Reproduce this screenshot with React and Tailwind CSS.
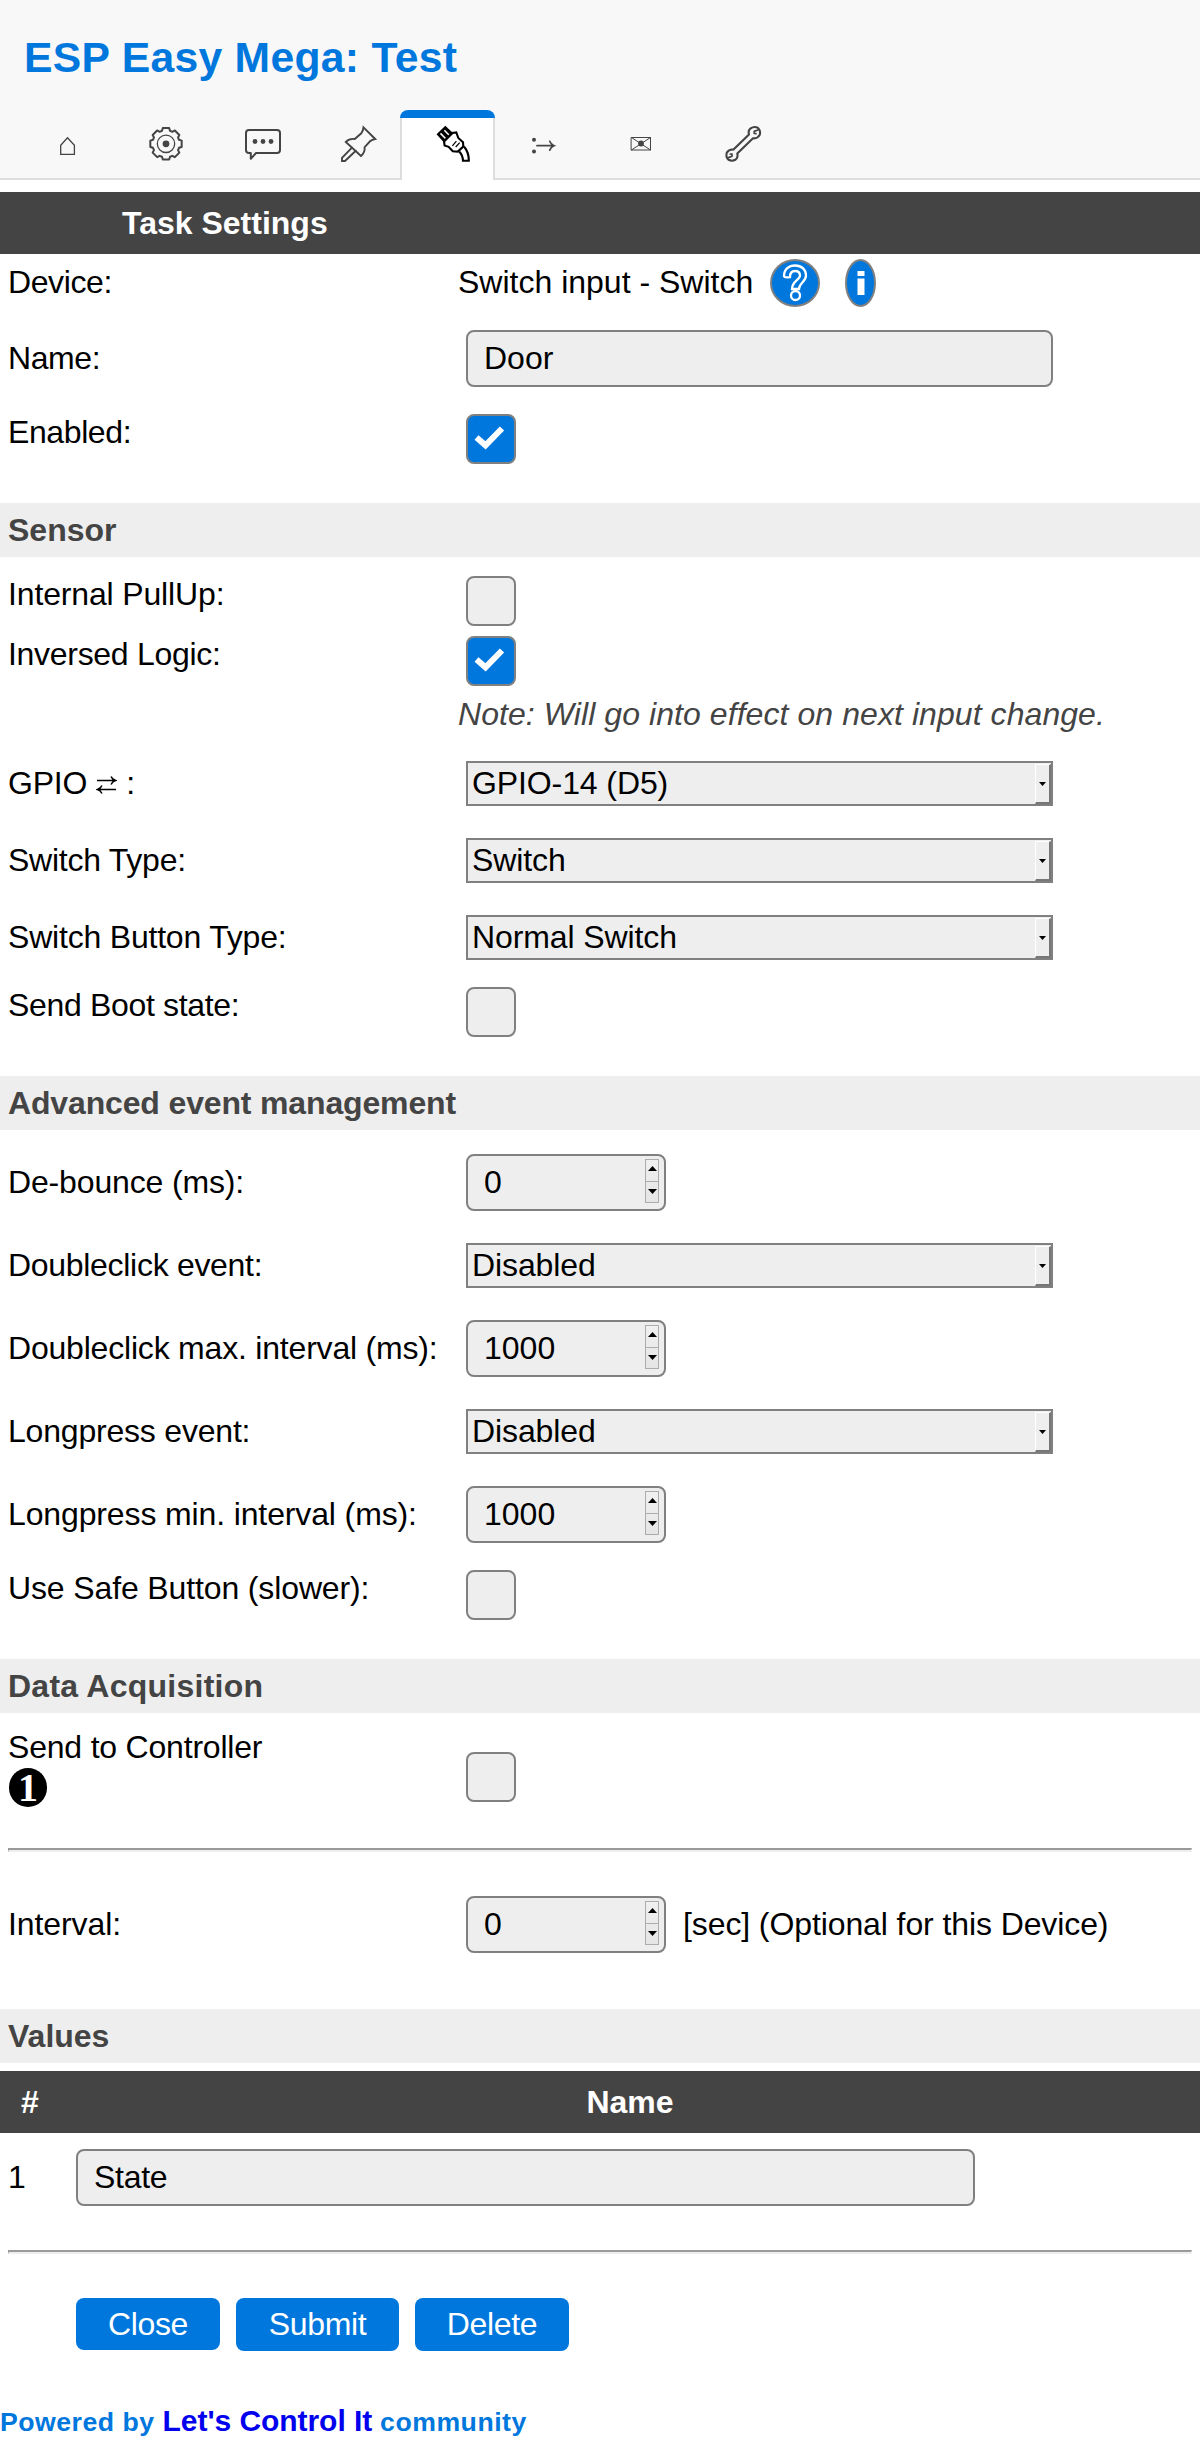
import React from "react";

const stroke = { fill: "none", stroke: "#444", strokeWidth: 2, strokeLinejoin: "round", strokeLinecap: "round" };

function gearPath(cx, cy) {
  const pts = [];
  for (let i = 0; i < 8; i++) {
    const a = (i * Math.PI) / 4;
    [[-0.3, 13.6], [-0.2, 16], [0.2, 16], [0.3, 13.6]].forEach(([d, r]) => {
      pts.push(`${(cx + r * Math.sin(a + d)).toFixed(2)} ${(cy - r * Math.cos(a + d)).toFixed(2)}`);
    });
  }
  return `M${pts.join("L")}Z`;
}

/* Tab drawings share one coordinate space, measured from the left edge of the header. */
const tabs = [
  { id: "main", x: 20, w: 95, cls: "w-[95px]", art: <path d="M60.7 154.4V145.2L67.5 137.8L74.400 145.2V154.4Z" {...stroke} strokeWidth="1.3" strokeLinejoin="miter" /> },
  {
    id: "config", x: 115, w: 102, cls: "w-[102px]",
    art: (
      <g {...stroke}>
        <path d={gearPath(166, 143.8)} />
        <circle cx="166" cy="143.8" r="8.7" strokeWidth="1.3" />
        <circle cx="166" cy="143.8" r="3.4" fill="#444" stroke="none" />
      </g>
    ),
  },
  {
    id: "controllers", x: 217, w: 92, cls: "w-[92px]",
    art: (
      <g {...stroke}>
        <path d="M249 130H277Q280 130 280 133V150Q280 153 277 153H256L250.8 158.8V153H249Q246 153 246 150V133Q246 130 249 130Z" />
        <g fill="#444" stroke="none">
          <circle cx="255" cy="141.5" r="2.4" />
          <circle cx="263" cy="141.5" r="2.4" />
          <circle cx="271" cy="141.5" r="2.4" />
        </g>
      </g>
    ),
  },
  {
    id: "hardware", x: 309, w: 91, cls: "w-[91px]",
    art: (
      <g {...stroke} strokeWidth="1.9" strokeLinejoin="miter">
        <path d="M363.5 127.3L375.2 139Q372 139.6 370 141.3L364.6 147.2Q365.2 152.5 361 155.9L345.8 141.9Q349.5 138.3 354.8 139L361.3 133.3Q363.2 130.6 363.5 127.3Z" />
        <path d="M352 147.6L342 157.8V161H345L355.8 150.8" />
      </g>
    ),
  },
  {
    id: "devices", x: 402, w: 91, active: true,
    art: (
      <g fill="none" stroke="#000" strokeWidth="2.1" strokeLinejoin="miter">
        <path d="M445.3 127.3L438 134.3L444.2 141.2L452 133.6Z" fill="#000" />
        <path d="M444.3 130.2L450 136M440.5 133.4L446 139" stroke="#fff" strokeWidth="1.5" />
        <path d="M444 141.2L452 133L456.3 132.5L458.3 138L463 142.3L463.3 146.5L457.8 151.6L452.8 151.2L448.6 146.8L444.6 145.5Z" />
        <path d="M452.4 145.8L456.4 141.2M455.7 147L459.7 142.6" strokeWidth="1.2" />
        <path d="M464 146.5Q469 152.5 468.8 160.8H463Q463 155.5 459.2 151.5" />
      </g>
    ),
  },
  {
    id: "rules", x: 495, w: 97, cls: "w-[97px]",
    art: (
      <g {...stroke} strokeWidth="1.7">
        <circle cx="534" cy="139.8" r="2" fill="#444" stroke="none" />
        <circle cx="534" cy="151.6" r="2" fill="#444" stroke="none" />
        <path d="M537 145.7H553.5M549.7 141.3Q551 144.6 554 145.7Q551 146.8 549.7 150.1" strokeLinejoin="miter" />
      </g>
    ),
  },
  {
    id: "notifications", x: 592, w: 99, cls: "w-[99px]",
    art: (
      <g {...stroke}>
        <path d="M631.5 137.5H650.5V150H631.5ZM631.5 137.5L650.5 150M650.5 137.5L631.5 150" strokeWidth="1" />
        <circle cx="641" cy="143.5" r="2.9" fill="#444" stroke="none" />
      </g>
    ),
  },
  {
    id: "tools", x: 691, w: 104, cls: "w-[104px]",
    art: (
      <g {...stroke} strokeWidth="2.1">
        <path d="M733.5 149.6L749 134.400Q747.8 130.6 750.6 128.4Q754.3 125.8 758 127.9Q761 130.8 759.8 134.8Q757.4 139 753 138.3L737.3 153.6Q738.4 157.2 735.4 159.8Q732 161.6 728.5 159.8Q725.4 156.6 726.8 152.6Q729.2 148.8 733.5 149.6Z" />
        <path d="M757.8 130L754.2 131.4V133.4L756 133.6M728.5 157.6L732 156.2V154.2L730.2 154" strokeWidth="1.7" />
      </g>
    ),
  },
];

function TabArt({ tab }) {
  return (
    <svg className="block" width={tab.w} height="60" viewBox={`${tab.x} 118 ${tab.w} 60`}>
      {tab.art}
    </svg>
  );
}

function Header() {
  return (
    <header className="h-[180px] bg-[#f8f8f8]">
      <h1 className="h-[110px] pl-6 pt-[33px] text-[42.67px] leading-[48px] font-bold tracking-[0.3px] text-[#0077dd]">ESP Easy Mega: Test</h1>
      <nav className="flex h-[70px] pl-5 shadow-[inset_0_-2px_0_#ddd]">
        {tabs.map((t) =>
          t.active ? (
            <a key={t.id} className="flex w-[95px] shrink-0 flex-col overflow-hidden rounded-t-lg">
              <span className="h-2 bg-[#0077dd]" />
              <span className="flex-1 border-x-2 border-[#ddd] bg-white"><TabArt tab={t} /></span>
            </a>
          ) : (
            <a key={t.id} className={`shrink-0 pt-2 ${t.cls}`}><TabArt tab={t} /></a>
          )
        )}
      </nav>
    </header>
  );
}

function Section({ children, className = "" }) {
  return <h2 className={`flex h-[54px] items-center bg-[#eee] pl-2 font-bold text-[#444] ${className}`}>{children}</h2>;
}

function Row({ label, className, labelClass = "tracking-[-0.2px]", children }) {
  return (
    <div className={`flex ${className}`}>
      <div className={`w-[458px] shrink-0 pb-0.5 pl-2 whitespace-nowrap ${labelClass}`}>{label}</div>
      {children}
    </div>
  );
}

function Check({ on, className = "" }) {
  return (
    <span className={`ml-2 flex size-[50px] shrink-0 rounded-lg border-2 border-[#808080] ${on ? "bg-[#0077dd]" : "bg-[#eee]"} ${className}`}>
      {on && (
        <svg width="46" height="46" viewBox="0 0 46 46">
          <path d="M8.500 21.500L17.500 29.300L34 12.500" fill="none" stroke="#fff" strokeWidth="6" />
        </svg>
      )}
    </span>
  );
}

function Select({ value }) {
  return (
    <span className="ml-2 flex h-[45px] w-[587px] items-end justify-between border-2 border-[#808080] bg-[#eee] pl-1">
      <span className="self-center pb-0.5 tracking-[-0.1px]">{value}</span>
      <span className="flex h-[40px] w-[16px] items-center justify-center border-t border-r-2 border-b-2 border-l border-t-white border-r-[#777] border-b-[#777] border-l-white">
        <svg width="7" height="4" viewBox="0 0 7 4"><path d="M0 0H7L3.500 4Z" /></svg>
      </span>
    </span>
  );
}

function NumberBox({ value }) {
  return (
    <span className="ml-2 flex h-[57px] w-[200px] shrink-0 justify-between rounded-lg border-2 border-[#808080] bg-[#eee] pl-4">
      <span className="self-center pb-0.5">{value}</span>
      <span className="mt-[3px] mr-[5px] flex h-[44px] w-[14px] flex-col border border-[#acacac] bg-gradient-to-b from-[#f0f0f0] to-[#e5e5e5]">
        <span className="flex h-[22px] items-center justify-center border-b border-[#acacac] pb-1">
          <svg width="9" height="5" viewBox="0 0 9 5"><path d="M0 5H9L4.500 0Z" /></svg>
        </span>
        <span className="flex h-[20px] items-center justify-center pb-px">
          <svg width="9" height="5" viewBox="0 0 9 5"><path d="M0 0H9L4.500 5Z" /></svg>
        </span>
      </span>
    </span>
  );
}

function Rule() {
  return <div className="mx-2 h-1 border-x border-y-2 border-t-[#9a9a9a] border-r-[#eee] border-b-[#eee] border-l-[#9a9a9a]" />;
}

function SwapIcon() {
  return (
    <svg className="mr-[9px] ml-[9px] inline-block" width="21" height="20" viewBox="0 0 22 20" fill="none" stroke="#000" strokeWidth="1.6">
      <path d="M1 5.2H20M15.8 1Q17 4.2 20.500 5.2Q17 6.2 15.8 9.400M21 14.8H2M6.2 10.6Q5 13.8 1.500 14.8Q5 15.8 6.2 19" />
    </svg>
  );
}

export default function App() {
  return (
    <div className="h-[2440px] w-[1200px] overflow-hidden bg-white font-['Liberation_Sans',Arial,sans-serif] text-[32px] leading-[36px] text-black">
      <Header />
      <div className="mt-3 flex h-[62px] items-center bg-[#444] pl-[122px] font-bold text-white">Task Settings</div>

      <Row label="Device:" labelClass="tracking-[-0.4px]" className="h-[58px] items-center">
        <span className="pb-0.5 whitespace-nowrap">Switch input - Switch</span>
        <span className="ml-[17px] flex h-12 w-[50px] items-center justify-center rounded-[50%] border-2 border-[#808080] bg-[#0077dd]">
          <svg width="26" height="38" viewBox="0 0 26 38" fill="none" stroke="#fff" strokeWidth="2.300">
            <path d="M2 12C2 5 7 1.500 13 1.500C20 1.500 24 6 24 11.500C24 18 17 19 17 25H10C10 17 18 16 18 11.500C18 8.500 16 7 13 7C10 7 8 9 8 13C5 13.500 2.500 14 2 12Z" />
            <circle cx="13.500" cy="31.500" r="4.500" />
          </svg>
        </span>
        <span className="ml-[25px] flex h-12 w-[31px] items-center justify-center rounded-[50%] border-2 border-[#808080] bg-[#0077dd]">
          <svg width="8" height="24" viewBox="0 0 8 24" fill="#fff"><path d="M.5 0H7.500V5H.5ZM.5 7.500H7.500V24H.5Z" /></svg>
        </span>
      </Row>
      <Row label="Name:" labelClass="tracking-[-0.4px]" className="h-[93px] items-center">
        <span className="ml-2 flex h-[57px] w-[587px] items-center rounded-lg border-2 border-[#808080] bg-[#eee] pb-0.5 pl-4">Door</span>
      </Row>
      <Row label="Enabled:" labelClass="tracking-[-0.4px]" className="h-[98px] items-start pt-[9px]"><Check on /></Row>

      <Section>Sensor</Section>
      <Row label="Internal PullUp:" labelClass="tracking-[-0.15px]" className="h-[70px] items-start pt-[19px]"><Check /></Row>
      <Row label="Inversed Logic:" labelClass="tracking-[-0.3px]" className="h-[60px] items-start pt-[9px]"><Check on /></Row>
      <Row label="" className="h-[58px] items-start pt-[9px]">
        <span className="tracking-[0.07px] whitespace-nowrap text-[#444] italic">Note: Will go into effect on next input change.</span>
      </Row>
      <Row label={<>GPIO<SwapIcon />:</>} className="h-[77px] items-center"><Select value="GPIO-14 (D5)" /></Row>
      <Row label="Switch Type:" labelClass="tracking-[-0.25px]" className="h-[77px] items-center"><Select value="Switch" /></Row>
      <Row label="Switch Button Type:" className="h-[77px] items-center"><Select value="Normal Switch" /></Row>
      <Row label="Send Boot state:" labelClass="tracking-[-0.33px]" className="h-[100px] items-start pt-[11px]"><Check /></Row>

      <Section className="tracking-[-0.15px]">Advanced event management</Section>
      <div className="pt-[11px]">
        <Row label="De-bounce (ms):" labelClass="tracking-[-0.15px]" className="h-[83px] items-center"><NumberBox value="0" /></Row>
        <Row label="Doubleclick event:" labelClass="tracking-[-0.3px]" className="h-[83px] items-center"><Select value="Disabled" /></Row>
        <Row label="Doubleclick max. interval (ms):" className="h-[83px] items-center"><NumberBox value="1000" /></Row>
        <Row label="Longpress event:" className="h-[83px] items-center"><Select value="Disabled" /></Row>
        <Row label="Longpress min. interval (ms):" labelClass="tracking-[-0.13px]" className="h-[83px] items-center"><NumberBox value="1000" /></Row>
        <Row label="Use Safe Button (slower):" labelClass="tracking-[-0.13px]" className="h-[103px] items-start pt-[14px]"><Check /></Row>
      </div>

      <Section className="tracking-[0.25px]">Data Acquisition</Section>
      <Row
        className="h-[135px] items-start pt-[16px]"
        label={
          <>
            Send to Controller
            <span className="mt-[3px] ml-px flex h-[39px] w-[38px] items-center justify-center rounded-full bg-black font-['Liberation_Serif',serif] text-[40px] font-bold text-white">1</span>
          </>
        }
      >
        <Check className="mt-[23px]" />
      </Row>
      <Rule />
      <Row label="Interval:" labelClass="tracking-[-0.1px]" className="mb-3 h-[145px] items-center">
        <NumberBox value="0" />
        <span className="ml-[17px] pb-0.5 tracking-[-0.1px] whitespace-nowrap">[sec] (Optional for this Device)</span>
      </Row>

      <Section>Values</Section>
      <div className="mt-2 flex h-[62px] items-center bg-[#444] font-bold text-white">
        <span className="w-[60px] text-center">#</span>
        <span className="w-[1140px] text-center">Name</span>
      </div>
      <div className="mb-7 flex h-[89px] items-center">
        <span className="w-[76px] pb-0.5 pl-2">1</span>
        <span className="flex h-[57px] w-[899px] items-center rounded-lg border-2 border-[#808080] bg-[#eee] pb-0.5 pl-4 tracking-[-0.3px]">State</span>
      </div>
      <Rule />
      <div className="mt-11 flex items-start gap-4 pl-[76px] tracking-[-0.35px] text-white">
        <span className="flex h-[52px] w-[144px] items-center justify-center rounded-lg bg-[#0077dd]">Close</span>
        <span className="flex h-[53px] w-[163px] items-center justify-center rounded-lg bg-[#0077dd] pb-px">Submit</span>
        <span className="flex h-[53px] w-[154px] items-center justify-center rounded-lg bg-[#0077dd] pb-px">Delete</span>
      </div>
      <footer className="mt-[52px] text-[26.67px] font-bold tracking-[0.5px] whitespace-nowrap text-[#0077dd]">
        Powered by <a className="text-[30px] tracking-[-0.05px] text-[#0000ee]">Let's Control It</a> community
      </footer>
    </div>
  );
}
